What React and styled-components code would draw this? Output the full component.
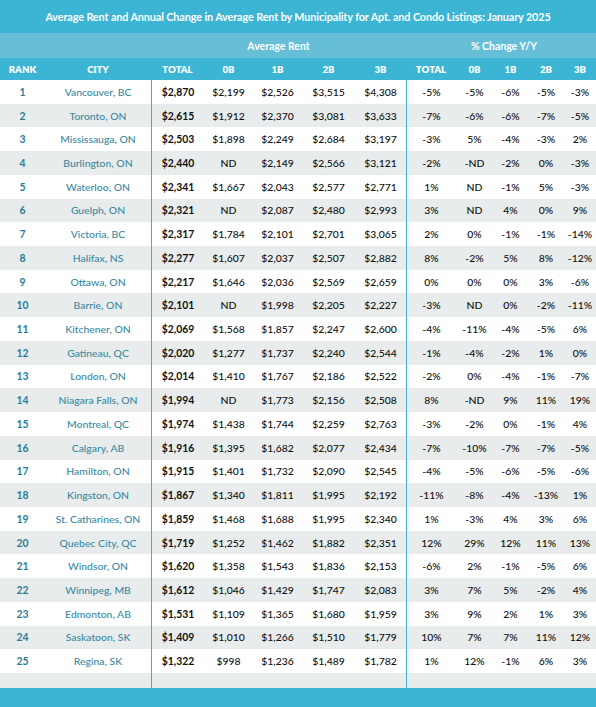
import React from "react";
import styled, { createGlobalStyle } from "styled-components";

const Global = createGlobalStyle`
  html, body { margin: 0; padding: 0; background: #ffffff; }
  body { font-family: Lato, "Open Sans", Arial, sans-serif; }
`;

const COLS = "45px 106px 53px 49px 49px 53px 51px 50px 37px 35px 36px 32px";
const TEAL = "#3bb5d3";
const LIGHT_TEAL = "#66bfd6";

const Page = styled.div`
  width: 596px;
  height: 707px;
  display: flex;
  flex-direction: column;
  overflow: hidden;
`;

const TitleBar = styled.div`
  height: 33px;
  background: ${TEAL};
  color: #fff;
  font-weight: 700;
  font-size: 10.8px;
  display: flex;
  align-items: center;
  justify-content: center;
  letter-spacing: -0.1px;
`;

const GroupBar = styled.div`
  height: 25px;
  background: ${LIGHT_TEAL};
  display: grid;
  grid-template-columns: 151px 255px 196px;
  align-items: center;
  color: #fff;
  font-weight: 700;
  font-size: 10.5px;
`;

const GroupLabel = styled.div`
  text-align: center;
`;

const HeaderRow = styled.div`
  height: 22px;
  background: ${TEAL};
  display: grid;
  grid-template-columns: ${COLS};
  align-items: center;
  color: #fff;
  font-weight: 800;
  font-size: 9.6px;
`;

const HeadCell = styled.div`
  text-align: center;
`;

const Body = styled.div`
  display: flex;
  flex-direction: column;
`;

const Row = styled.div`
  height: ${(p) => (p.$empty ? "15px" : "23.72px")};
  background: ${(p) => (p.$shade ? "#e8ecec" : "#ffffff")};
  display: grid;
  grid-template-columns: ${COLS};
`;

const Cell = styled.div`
  display: flex;
  align-items: center;
  justify-content: center;
  font-size: 10.4px;
  color: ${(p) => (p.$kind === "rank" ? "#2b7c93" : p.$kind === "city" ? "#3a8aa3" : "#111")};
  font-weight: ${(p) => (p.$kind === "rank" || p.$kind === "total" ? 700 : 500)};
  border-left: ${(p) => (p.$divider ? "1px solid #44aecb" : "none")};
  white-space: nowrap;
`;

const Footer = styled.div`
  flex: 1;
  background: ${TEAL};
`;

const data = [
  ["1","Vancouver, BC","$2,870","$2,199","$2,526","$3,515","$4,308","-5%","-5%","-6%","-5%","-3%"],
  ["2","Toronto, ON","$2,615","$1,912","$2,370","$3,081","$3,633","-7%","-6%","-6%","-7%","-5%"],
  ["3","Mississauga, ON","$2,503","$1,898","$2,249","$2,684","$3,197","-3%","5%","-4%","-3%","2%"],
  ["4","Burlington, ON","$2,440","ND","$2,149","$2,566","$3,121","-2%","-ND","-2%","0%","-3%"],
  ["5","Waterloo, ON","$2,341","$1,667","$2,043","$2,577","$2,771","1%","ND","-1%","5%","-3%"],
  ["6","Guelph, ON","$2,321","ND","$2,087","$2,480","$2,993","3%","ND","4%","0%","9%"],
  ["7","Victoria, BC","$2,317","$1,784","$2,101","$2,701","$3,065","2%","0%","-1%","-1%","-14%"],
  ["8","Halifax, NS","$2,277","$1,607","$2,037","$2,507","$2,882","8%","-2%","5%","8%","-12%"],
  ["9","Ottawa, ON","$2,217","$1,646","$2,036","$2,569","$2,659","0%","0%","0%","3%","-6%"],
  ["10","Barrie, ON","$2,101","ND","$1,998","$2,205","$2,227","-3%","ND","0%","-2%","-11%"],
  ["11","Kitchener, ON","$2,069","$1,568","$1,857","$2,247","$2,600","-4%","-11%","-4%","-5%","6%"],
  ["12","Gatineau, QC","$2,020","$1,277","$1,737","$2,240","$2,544","-1%","-4%","-2%","1%","0%"],
  ["13","London, ON","$2,014","$1,410","$1,767","$2,186","$2,522","-2%","0%","-4%","-1%","-7%"],
  ["14","Niagara Falls, ON","$1,994","ND","$1,773","$2,156","$2,508","8%","-ND","9%","11%","19%"],
  ["15","Montreal, QC","$1,974","$1,438","$1,744","$2,259","$2,763","-3%","-2%","0%","-1%","4%"],
  ["16","Calgary, AB","$1,916","$1,395","$1,682","$2,077","$2,434","-7%","-10%","-7%","-7%","-5%"],
  ["17","Hamilton, ON","$1,915","$1,401","$1,732","$2,090","$2,545","-4%","-5%","-6%","-5%","-6%"],
  ["18","Kingston, ON","$1,867","$1,340","$1,811","$1,995","$2,192","-11%","-8%","-4%","-13%","1%"],
  ["19","St. Catharines, ON","$1,859","$1,468","$1,688","$1,995","$2,340","1%","-3%","4%","3%","6%"],
  ["20","Quebec City, QC","$1,719","$1,252","$1,462","$1,882","$2,351","12%","29%","12%","11%","13%"],
  ["21","Windsor, ON","$1,620","$1,358","$1,543","$1,836","$2,153","-6%","2%","-1%","-5%","6%"],
  ["22","Winnipeg, MB","$1,612","$1,046","$1,429","$1,747","$2,083","3%","7%","5%","-2%","4%"],
  ["23","Edmonton, AB","$1,531","$1,109","$1,365","$1,680","$1,959","3%","9%","2%","1%","3%"],
  ["24","Saskatoon, SK","$1,409","$1,010","$1,266","$1,510","$1,779","10%","7%","7%","11%","12%"],
  ["25","Regina, SK","$1,322","$998","$1,236","$1,489","$1,782","1%","12%","-1%","6%","3%"],
];

const headers = ["RANK","CITY","TOTAL","0B","1B","2B","3B","TOTAL","0B","1B","2B","3B"];

const kindFor = (i) => (i === 0 ? "rank" : i === 1 ? "city" : i === 2 ? "total" : "val");

export default function App() {
  return (
    <Page>
      <Global />
      <TitleBar>
        Average Rent and Annual Change in Average Rent by Municipality for Apt. and Condo Listings: January 2025
      </TitleBar>
      <GroupBar>
        <GroupLabel />
        <GroupLabel>Average Rent</GroupLabel>
        <GroupLabel>% Change Y/Y</GroupLabel>
      </GroupBar>
      <HeaderRow>
        {headers.map((h, i) => (
          <HeadCell key={i}>{h}</HeadCell>
        ))}
      </HeaderRow>
      <Body>
        {data.map((r, ri) => (
          <Row key={ri} $shade={ri % 2 === 1}>
            {r.map((v, ci) => (
              <Cell key={ci} $kind={kindFor(ci)} $divider={ci === 2 || ci === 7}>
                {v}
              </Cell>
            ))}
          </Row>
        ))}
        <Row $empty $shade>
          {headers.map((_, ci) => (
            <Cell key={ci} $divider={ci === 2 || ci === 7} />
          ))}
        </Row>
      </Body>
      <Footer />
    </Page>
  );
}
